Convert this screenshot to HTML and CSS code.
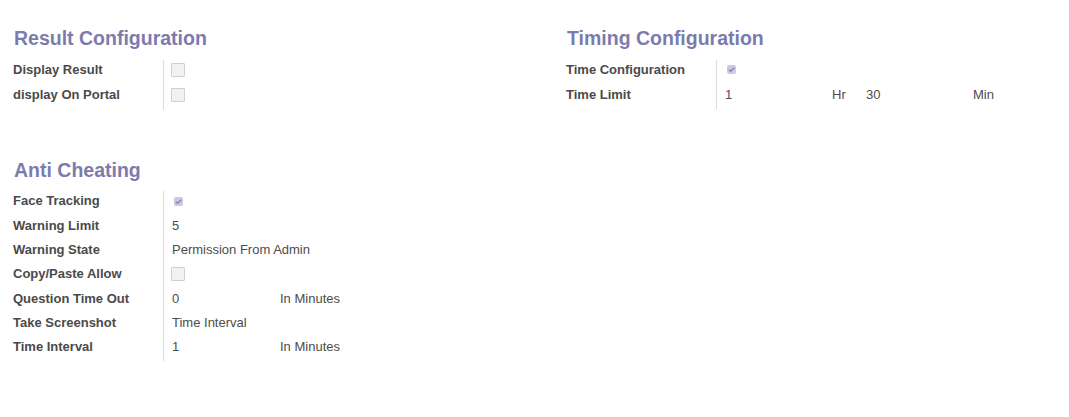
FILE: index.html
```html
<!DOCTYPE html>
<html>
<head>
<meta charset="utf-8">
<link rel="stylesheet" href="styles.css">
</head>
<body>
<div class="sheet">
  <div class="cols">
    <section class="group">
      <h2 class="title">Result Configuration</h2>
      <div class="rows">
        <div class="row cb"><div class="lbl">Display Result</div><div class="val"><span class="chk"></span></div></div>
        <div class="row cb"><div class="lbl">display On Portal</div><div class="val"><span class="chk"></span></div></div>
      </div>
    </section>
    <section class="group">
      <h2 class="title">Timing Configuration</h2>
      <div class="rows">
        <div class="row cb"><div class="lbl">Time Configuration</div><div class="val"><span class="chk on"><svg viewBox="0 0 8 8" width="8" height="8"><path d="M1.6 4.2 L3.2 5.6 L6.4 2.4" fill="none" stroke="#8784bb" stroke-width="1.3"/></svg></span></div></div>
        <div class="row"><div class="lbl">Time Limit</div><div class="val time"><span class="t1">1</span><span class="t2">Hr</span><span class="t3">30</span><span class="t4">Min</span></div></div>
      </div>
    </section>
  </div>
  <section class="group anti">
    <h2 class="title">Anti Cheating</h2>
    <div class="rows">
      <div class="row cb"><div class="lbl">Face Tracking</div><div class="val"><span class="chk on"><svg viewBox="0 0 8 8" width="8" height="8"><path d="M1.6 4.2 L3.2 5.6 L6.4 2.4" fill="none" stroke="#8784bb" stroke-width="1.3"/></svg></span></div></div>
      <div class="row"><div class="lbl">Warning Limit</div><div class="val">5</div></div>
      <div class="row"><div class="lbl">Warning State</div><div class="val">Permission From Admin</div></div>
      <div class="row cb"><div class="lbl">Copy/Paste Allow</div><div class="val"><span class="chk"></span></div></div>
      <div class="row"><div class="lbl">Question Time Out</div><div class="val unit"><span class="num">0</span><span>In Minutes</span></div></div>
      <div class="row"><div class="lbl">Take Screenshot</div><div class="val">Time Interval</div></div>
      <div class="row"><div class="lbl">Time Interval</div><div class="val unit"><span class="num">1</span><span>In Minutes</span></div></div>
    </div>
  </section>
</div>
</body>
</html>
```
FILE: styles.css
```css
html, body {
  margin: 0;
  padding: 0;
  background: #ffffff;
}
body {
  font-family: "Liberation Sans", Arial, sans-serif;
  font-size: 13px;
  color: #4c4c4c;
}
.sheet {
  padding: 27px 0 0 13px;
}
.cols {
  display: grid;
  grid-template-columns: 553px 1fr;
}
.title {
  margin: 0 0 9px 1px;
  font-size: 19.5px;
  line-height: 23.5px;
  font-weight: bold;
  color: #7c7bad;
}
.rows {
  display: flex;
  flex-direction: column;
}
.row {
  display: flex;
  height: 24px;
}
.row.cb {
  height: 25px;
}
.lbl {
  width: 150px;
  flex: none;
  font-weight: bold;
  color: #4a4a4a;
  line-height: 19.5px;
  border-right: 1px solid #dcdcdc;
}
.val {
  padding-left: 8px;
  line-height: 19.5px;
  color: #4c4c4c;
}
.chk {
  display: flex;
  align-items: center;
  justify-content: center;
  margin-top: 3px;
  margin-left: -1px;
  width: 12px;
  height: 12px;
  border: 1px solid #cfcfcf;
  background: #f2f2f2;
  border-radius: 1px;
}
.chk.on {
  border-color: transparent;
  background: transparent;
}
.chk.on svg {
  width: 9px;
  height: 9px;
  background: #cbc9e2;
  border-radius: 2px;
  display: block;
}
.unit {
  display: flex;
}
.unit .num {
  width: 108px;
}
.time {
  display: flex;
}
.time .t1 { width: 107px; }
.time .t2 { width: 34px; }
.time .t3 { width: 107px; }
.anti {
  margin-top: 49px;
}
```
